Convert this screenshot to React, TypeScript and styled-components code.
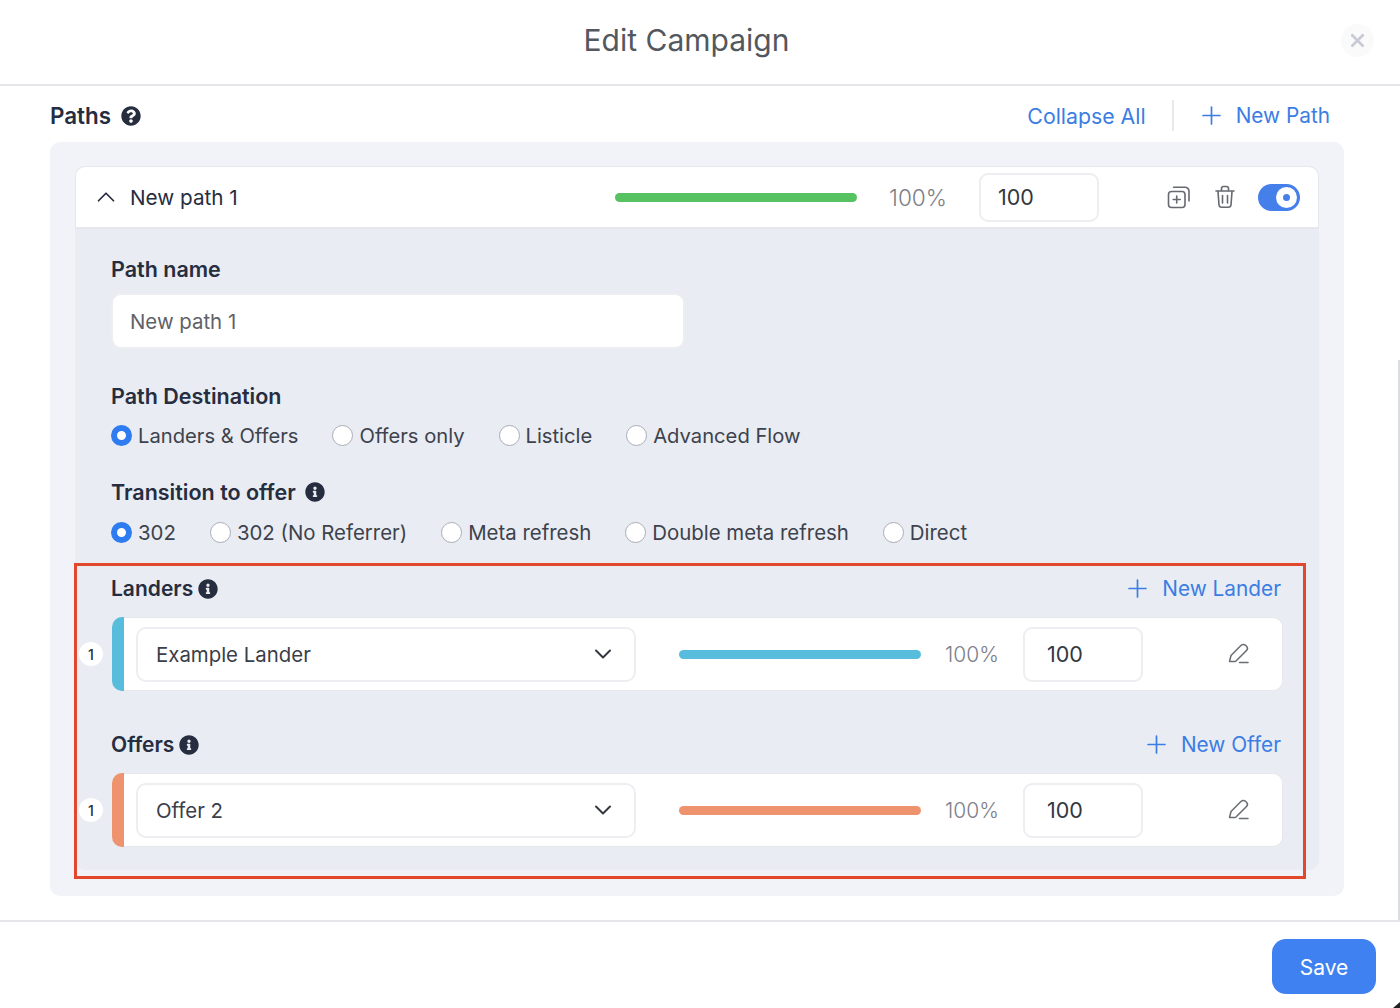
import React from "react";
import styled, { createGlobalStyle } from "styled-components";
import { FaInfoCircle, FaQuestionCircle } from "react-icons/fa";
import { ChevronDown, ChevronUp, Plus, X } from "lucide-react";

const Global = createGlobalStyle`
  html, body { margin: 0; padding: 0; background: #fff; }
  body { font-family: Inter, "Liberation Sans", sans-serif; color: #262d3f; -webkit-font-smoothing: antialiased; }
  * { box-sizing: border-box; }
`;

const Page = styled.div`
  position: relative;
  width: 1400px;
  height: 1008px;
  overflow: hidden;
  background: #fff;
  display: flex;
  flex-direction: column;
`;
const Header = styled.header`
  height: 86px;
  flex: none;
  border-bottom: 2px solid #e4e6ea;
  display: flex;
  align-items: center;
  justify-content: center;
  position: relative;
  padding-bottom: 5px;
`;
const Title = styled.h1`
  margin: 0 27px 0 0;
  font-size: 30px;
  font-weight: 400;
  color: #53575e;
`;
const CloseBtn = styled.div`
  position: absolute;
  left: 1341px;
  top: 24px;
  width: 33px;
  height: 33px;
  border-radius: 50%;
  background: #fafafb;
  display: flex;
  align-items: center;
  justify-content: center;
  color: #c8cad6;
`;
const Content = styled.main`
  height: 836px;
  flex: none;
  padding: 0 56px 0 50px;
  border-bottom: 2px solid #e4e6ea;
`;
const PathsBar = styled.div`
  height: 56px;
  display: flex;
  align-items: center;
  justify-content: space-between;
  padding-right: 14px;
  padding-top: 3px;
`;
const PathsTitle = styled.div`
  display: flex;
  align-items: center;
  gap: 10px;
  font-size: 22.4px;
  font-weight: 600;
  color: #262d3f;
  svg { width: 20px; height: 20px; }
`;
const BarActions = styled.div`
  display: flex;
  align-items: center;
`;
const LinkText = styled.span`
  display: inline-flex;
  align-items: center;
  gap: 10px;
  color: #3b7de3;
  font-size: 20.8px;
  font-weight: 400;
  white-space: nowrap;
`;
const CollapseLink = styled(LinkText)`
  font-size: 21.3px;
`;
const VDivider = styled.div`
  width: 2px;
  height: 31px;
  background: #e7e8ec;
  margin: 0 23px 0 26px;
`;
const Panel = styled.section`
  width: 1294px;
  height: 754px;
  background: #f1f3f9;
  border-radius: 10px;
  padding: 24px 25px 0;
`;
const Card = styled.div`
  width: 1244px;
  height: 704px;
  background: #e9ecf3;
  border-radius: 10px;
`;
const CardHead = styled.div`
  height: 63px;
  background: #fff;
  border: 1px solid #e5e7ec;
  border-bottom: 2px solid #e5e7ec;
  border-radius: 10px 10px 0 0;
  display: flex;
  align-items: center;
  padding-left: 15px;
  color: #262d3f;
`;
const HeadName = styled.span`
  font-size: 20.7px;
  margin-left: 9px;
  width: 494px;
  margin-right: -9px;
`;
const Bar = styled.div<{ $color: string }>`
  width: 242px;
  height: 9px;
  border-radius: 5px;
  background: ${(p) => p.$color};
  flex: none;
`;
const Percent = styled.span`
  font-size: 22.6px;
  font-weight: 300;
  color: #7d8087;
`;
const NumberBox = styled.div`
  width: 120px;
  height: 49px;
  border: 2px solid #eceef1;
  border-radius: 9px;
  background: #fff;
  display: flex;
  align-items: center;
  padding-left: 17px;
  font-size: 21.5px;
  font-weight: 400;
  color: #33373f;
`;
const HeadPercent = styled(Percent)`
  margin-left: 32px;
  margin-right: 32px;
`;
const HeadIcons = styled.div`
  display: flex;
  align-items: center;
  margin-left: 68px;
  color: #66696f;
`;
const IconGap = styled.div`
  width: 23px;
`;
const Toggle = styled.div`
  width: 42px;
  height: 27px;
  margin-left: 22px;
  border-radius: 14px;
  background: #447fea;
  display: flex;
  align-items: center;
  justify-content: flex-end;
  padding-right: 3px;
`;
const Knob = styled.div`
  width: 21px;
  height: 21px;
  border-radius: 50%;
  background: #fff;
  display: flex;
  align-items: center;
  justify-content: center;
  &::after {
    content: "";
    width: 7px;
    height: 7px;
    border-radius: 50%;
    background: #447fea;
  }
`;
const Fields = styled.div`
  padding: 27px 36px 0;
`;
const FieldLabel = styled.div`
  display: flex;
  align-items: center;
  gap: 9px;
  font-size: 21.5px;
  font-weight: 600;
  color: #262d3f;
  height: 26px;
  svg { width: 20px; height: 20px; }
`;
const TextInput = styled.div`
  width: 574px;
  height: 56px;
  margin-top: 11px;
  background: #fff;
  border: 2px solid #eceef1;
  border-radius: 10px;
  display: flex;
  align-items: center;
  padding-left: 17px;
  font-size: 20.4px;
  color: #5f6268;
`;
const RadioRow = styled.div<{ $top: number; $size: number }>`
  display: flex;
  align-items: center;
  gap: 34px;
  margin-top: ${(p) => p.$top}px;
  height: 28px;
  font-size: ${(p) => p.$size}px;
`;
const RadioItem = styled.label`
  display: flex;
  align-items: center;
  gap: 6px;
  color: #3d424c;
  white-space: nowrap;
`;
const RadioDot = styled.span<{ $on?: boolean }>`
  width: 21px;
  height: 21px;
  border-radius: 50%;
  flex: none;
  background: #fff;
  border: ${(p) => (p.$on ? "6px solid #2f7bf0" : "1.5px solid #a9adb5")};
`;
const Spacer = styled.div<{ $h: number }>`
  height: ${(p) => p.$h}px;
`;
const Marked = styled.div`
  width: 1232px;
  height: 316px;
  margin-left: -37px;
  margin-top: 17px;
  border: 3px solid #e2482c;
  padding: 5px 22px 0 34px;
`;
const SectionHead = styled.div`
  display: flex;
  align-items: center;
  justify-content: space-between;
  height: 35px;
`;
const SectionTitle = styled(FieldLabel)`
  gap: 5px;
  font-size: 21px;
`;
const Row = styled.div`
  position: relative;
  height: 74px;
  width: 1171px;
  margin: 11px 0 36px 1px;
  background: #fff;
  border: 1px solid #e6e8ed;
  border-left: 0;
  border-radius: 10px;
  display: flex;
  align-items: center;
`;
const ColorStrip = styled.div<{ $color: string }>`
  width: 12px;
  height: 74px;
  margin-top: -1px;
  margin-bottom: -1px;
  background: ${(p) => p.$color};
  border-radius: 10px 0 0 10px;
  flex: none;
`;
const Badge = styled.div`
  position: absolute;
  left: -33px;
  top: 24px;
  width: 24px;
  height: 24px;
  border-radius: 50%;
  background: #fff;
  display: flex;
  align-items: center;
  justify-content: center;
  font-size: 14px;
  font-weight: 500;
  color: #262d3f;
`;
const Select = styled.div`
  width: 500px;
  height: 55px;
  margin-left: 12px;
  border: 2px solid #eceef1;
  border-radius: 10px;
  background: #fff;
  display: flex;
  align-items: center;
  justify-content: space-between;
  padding: 0 17px 0 18px;
  font-size: 20.4px;
  color: #3a3f4a;
  flex: none;
`;
const RowBar = styled(Bar)`
  margin-left: 43px;
`;
const RowPercent = styled(Percent)`
  margin-left: 24px;
  margin-right: 24px;
  font-size: 21px;
`;
const RowNumber = styled(NumberBox)`
  height: 55px;
  padding-left: 22px;
`;
const EditIcon = styled.div`
  margin-left: 85px;
  display: flex;
  color: #6a6d73;
`;
const Footer = styled.footer`
  flex: 1;
  display: flex;
  justify-content: flex-end;
  padding: 17px 24px 0 0;
`;
const SaveButton = styled.button`
  width: 104px;
  height: 55px;
  border: 0;
  border-radius: 14px;
  padding: 1px 0 0;
  background: #4081f2;
  color: #fff;
  font-family: inherit;
  font-size: 21px;
  font-weight: 400;
`;
const ScrollEdge = styled.div`
  position: absolute;
  left: 1398px;
  top: 360px;
  width: 2px;
  height: 560px;
  background: #dcdde0;
`;
const Corner = styled.div`
  position: absolute;
  right: 0;
  bottom: 0;
  width: 0;
  height: 0;
  border-left: 7px solid transparent;
  border-bottom: 6px solid #222;
`;

const CopyIcon = () => (
  <svg width="24" height="24" viewBox="0 0 24 24" fill="none" stroke="currentColor" strokeWidth="1.6" strokeLinecap="round" strokeLinejoin="round">
    <rect x="1.5" y="6.5" width="16.5" height="16" rx="3" />
    <path d="M6.5 2.2h11.5a4 4 0 0 1 4 4v9.8" />
    <path d="M9.7 11v7M6.2 14.500h7" />
  </svg>
);
const TrashIcon = () => (
  <svg width="22" height="24" viewBox="0 0 22 24" fill="none" stroke="currentColor" strokeWidth="1.6" strokeLinecap="round" strokeLinejoin="round">
    <path d="M2 6h18" />
    <path d="M7.500 5.500V3.500a2 2 0 0 1 2-2h3a2 2 0 0 1 2 2v2" />
    <path d="M4 6.500l1 13.500a2.500 2.500 0 0 0 2.500 2.200h7a2.500 2.500 0 0 0 2.500-2.200l1-13.500" />
    <path d="M8.500 10.500v7.500M13.500 10.500v7.500" />
  </svg>
);
const PenIcon = () => (
  <svg width="22" height="22" viewBox="0 0 22 22" fill="none" stroke="currentColor" strokeWidth="1.5" strokeLinecap="round" strokeLinejoin="round">
    <path d="M1.500 18.500l1.500-6L13.200 2.300a3 3 0 0 1 4.300 0l1 1a3 3 0 0 1 0 4.200L8 18a2 2 0 0 1-1 .5z" />
    <path d="M11.500 19.500h8.500" />
  </svg>
);

const Radio = ({ label, on }: { label: string; on?: boolean }) => (
  <RadioItem>
    <RadioDot $on={on} />
    {label}
  </RadioItem>
);

const ItemRow = ({ color, name }: { color: string; name: string }) => (
  <Row>
    <Badge>1</Badge>
    <ColorStrip $color={color} />
    <Select>
      {name}
      <ChevronDown size={28} strokeWidth={1.7} color="#33373f" />
    </Select>
    <RowBar $color={color} />
    <RowPercent>100%</RowPercent>
    <RowNumber>100</RowNumber>
    <EditIcon>
      <PenIcon />
    </EditIcon>
  </Row>
);

export default function App() {
  return (
    <Page>
      <Global />
      <Header>
        <Title>Edit Campaign</Title>
        <CloseBtn>
          <X size={21} strokeWidth={3} />
        </CloseBtn>
      </Header>
      <Content>
        <PathsBar>
          <PathsTitle>
            Paths <FaQuestionCircle />
          </PathsTitle>
          <BarActions>
            <CollapseLink>Collapse All</CollapseLink>
            <VDivider />
            <LinkText>
              <Plus size={29} strokeWidth={1.4} />
              New Path
            </LinkText>
          </BarActions>
        </PathsBar>
        <Panel>
          <Card>
            <CardHead>
              <ChevronUp size={30} strokeWidth={1.4} />
              <HeadName>New path 1</HeadName>
              <Bar $color="#57c262" />
              <HeadPercent>100%</HeadPercent>
              <NumberBox>100</NumberBox>
              <HeadIcons>
                <CopyIcon />
                <IconGap />
                <TrashIcon />
                <Toggle>
                  <Knob />
                </Toggle>
              </HeadIcons>
            </CardHead>
            <Fields>
              <FieldLabel>Path name</FieldLabel>
              <TextInput>New path 1</TextInput>
              <Spacer $h={34} />
              <FieldLabel>Path Destination</FieldLabel>
              <RadioRow $top={12} $size={20.2}>
                <Radio on label="Landers & Offers" />
                <Radio label="Offers only" />
                <Radio label="Listicle" />
                <Radio label="Advanced Flow" />
              </RadioRow>
              <Spacer $h={30} />
              <FieldLabel>
                Transition to offer <FaInfoCircle />
              </FieldLabel>
              <RadioRow $top={13} $size={20.4}>
                <Radio on label="302" />
                <Radio label="302 (No Referrer)" />
                <Radio label="Meta refresh" />
                <Radio label="Double meta refresh" />
                <Radio label="Direct" />
              </RadioRow>
              <Marked>
                <SectionHead>
                  <SectionTitle>
                    Landers <FaInfoCircle />
                  </SectionTitle>
                  <LinkText>
                    <Plus size={29} strokeWidth={1.4} />
                    New Lander
                  </LinkText>
                </SectionHead>
                <ItemRow color="#58bcdc" name="Example Lander" />
                <SectionHead>
                  <SectionTitle>
                    Offers <FaInfoCircle />
                  </SectionTitle>
                  <LinkText>
                    <Plus size={29} strokeWidth={1.4} />
                    New Offer
                  </LinkText>
                </SectionHead>
                <ItemRow color="#ef936e" name="Offer 2" />
              </Marked>
            </Fields>
          </Card>
        </Panel>
      </Content>
      <Footer>
        <SaveButton>Save</SaveButton>
      </Footer>
      <ScrollEdge />
      <Corner />
    </Page>
  );
}
